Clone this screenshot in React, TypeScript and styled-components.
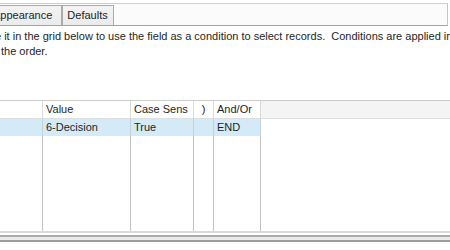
import React from "react";
import styled, { createGlobalStyle } from "styled-components";

const Global = createGlobalStyle`
  html, body { margin: 0; padding: 0; background: #ffffff; }
  body { font-family: "Liberation Sans", Arial, sans-serif; font-size: 11px; color: #1e1e1e; }
`;

const Page = styled.div`
  width: 450px;
  height: 250px;
  overflow: hidden;
  display: flex;
  flex-direction: column;
  background: #ffffff;
`;

const TabStrip = styled.div`
  margin-top: 3px;
  width: 447px;
  height: 21px;
  border-top: 1px solid #cfcfcf;
  border-right: 1px solid #c4c4c4;
  border-bottom: 1px solid #a3a3a3;
  background: #fbfbfb;
  display: flex;
  align-items: flex-end;
`;

const Tabs = styled.div`
  display: flex;
  margin-left: -12px;
`;

const Tab = styled.div<{ $padRight: number }>`
  height: 19px;
  line-height: 19px;
  padding: 0 ${(p) => p.$padRight}px 0 4px;
  border: 1px solid #acacac;
  border-bottom: none;
  background: linear-gradient(#f3f3f3, #ebebeb);
  white-space: nowrap;
`;

const Intro = styled.div`
  margin-top: 3px;
  line-height: 15px;
  white-space: nowrap;
`;

const IntroLine = styled.div<{ $shift: number }>`
  margin-left: ${(p) => p.$shift}px;
`;

const Grid = styled.div`
  margin-top: 41px;
  height: 132px;
  border-top: 1px solid #cbcbcb;
  display: grid;
  grid-template-columns: 43px 88px 63px 20px 47px 1fr;
  grid-template-rows: 18px 17px 1fr;
`;

const HeadCell = styled.div<{ $fill?: boolean; $center?: boolean }>`
  background: ${(p) => (p.$fill ? "#f4f4f4" : "#ffffff")};
  border-bottom: 1px solid #dedede;
  border-right: ${(p) => (p.$fill ? "none" : "1px solid #dadada")};
  padding-left: ${(p) => (p.$center ? "0" : "3px")};
  text-align: ${(p) => (p.$center ? "center" : "left")};
  line-height: 17px;
  white-space: nowrap;
  overflow: hidden;
`;

const RowCell = styled.div<{ $selected?: boolean; $center?: boolean; $last?: boolean }>`
  background: ${(p) => (p.$selected ? "#d4eaf6" : "#ffffff")};
  border-right: ${(p) =>
    p.$last ? "none" : p.$selected ? "1px solid #bfd3de" : "1px solid #c2c2c2"};
  padding-left: ${(p) => (p.$center ? "0" : "3px")};
  text-align: ${(p) => (p.$center ? "center" : "left")};
  line-height: 17px;
  white-space: nowrap;
  overflow: hidden;
`;

const FillCell = styled.div<{ $last?: boolean }>`
  background: #ffffff;
  border-right: ${(p) => (p.$last ? "none" : "1px solid #c2c2c2")};
`;

const Footer = styled.div`
  display: flex;
  flex-direction: column;
`;

const Rule = styled.div<{ $color: string; $h: number }>`
  height: ${(p) => p.$h}px;
  background: ${(p) => p.$color};
`;

const headers = ["", "Value", "Case Sens", ")", "And/Or"];
const row = ["", "6-Decision", "True", "", "END"];

export default function App() {
  return (
    <>
      <Global />
      <Page>
        <TabStrip>
          <Tabs>
            <Tab $padRight={9}>Appearance</Tab>
            <Tab $padRight={5}>Defaults</Tab>
          </Tabs>
        </TabStrip>
        <Intro>
          <IntroLine $shift={-5}>
            e it in the grid below to use the field as a condition to select records.&nbsp; Conditions are applied in
          </IntroLine>
          <IntroLine $shift={1}>the order.</IntroLine>
        </Intro>
        <Grid>
          {headers.map((h, i) => (
            <HeadCell key={"h" + i} $center={i === 3}>
              {h}
            </HeadCell>
          ))}
          <HeadCell $fill />
          {row.map((c, i) => (
            <RowCell key={"r" + i} $selected $center={i === 3}>
              {c}
            </RowCell>
          ))}
          <RowCell $last />
          {[0, 1, 2, 3, 4].map((i) => (
            <FillCell key={"f" + i} />
          ))}
          <FillCell $last />
        </Grid>
        <Footer>
          <Rule $color="#d9d9d9" $h={2} />
          <Rule $color="#ffffff" $h={2} />
          <Rule $color="#ababab" $h={2} />
          <Rule $color="#ebebeb" $h={3} />
          <Rule $color="#9d9d9d" $h={2} />
          <Rule $color="#ffffff" $h={8} />
        </Footer>
      </Page>
    </>
  );
}
